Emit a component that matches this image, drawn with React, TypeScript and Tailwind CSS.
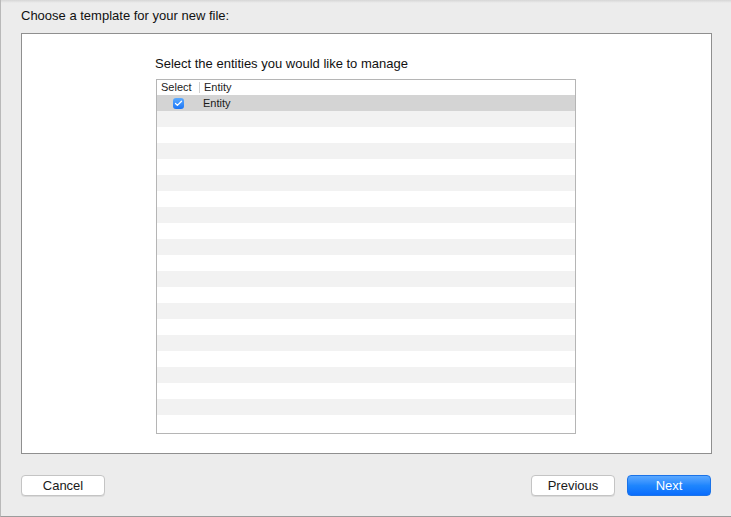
import { Check } from 'lucide-react'

const ROWS = 21

function Button({ label, primary }: { label: string; primary?: boolean }) {
  const base = 'h-[21px] rounded-[4px] text-[13px] leading-none flex items-center justify-center'
  const look = primary
    ? 'bg-gradient-to-b from-[#5aa8ff] via-[#1f86fd] to-[#0a6cfd] text-white border border-[#1b73e8]'
    : 'bg-white text-[#1a1a1a] border border-[#c4c4c4] shadow-[0_1px_0_rgba(0,0,0,0.08)]'
  return <button className={`${base} ${look} w-[84px]`}>{label}</button>
}

export default function App() {
  return (
    <div
      className="w-[731px] h-[517px] bg-[#ececec] flex flex-col border-l border-l-[#b9b9b9] border-b border-b-[#9c9c9c] overflow-hidden"
      style={{ fontFamily: '"Liberation Sans", Arial, sans-serif' }}
    >
      {/* top shadow */}
      <div className="h-[3px] bg-gradient-to-b from-[#d6d6d6] to-[#ececec] shrink-0" />

      <div className="pl-[20px] pt-[5px] text-[13px] leading-[16px] text-[#111]">
        Choose a template for your new file:
      </div>

      {/* content box */}
      <div className="ml-[20px] mt-[9px] w-[691px] h-[421px] bg-white border border-[#8f8f8f] shrink-0">
        <div className="pl-[133px] pt-[22px] text-[13px] leading-[16px] text-[#111]">
          Select the entities you would like to manage
        </div>

        <div className="ml-[134px] mt-[7px] w-[420px] h-[355px] border border-[#b5b5b5] bg-white overflow-hidden">
          {/* header */}
          <div className="h-[15px] flex items-center text-[11px] leading-none text-[#222] bg-white">
            <span className="pl-[4px] w-[42px]">Select</span>
            <span className="h-[11px] w-px bg-[#cfcfcf]" />
            <span className="pl-[4px]">Entity</span>
          </div>

          {/* rows */}
          <div className="flex flex-col">
            {Array.from({ length: ROWS }).map((_, i) => {
              const bg = i === 0 ? 'bg-[#d4d4d4]' : i % 2 === 1 ? 'bg-[#f2f2f2]' : 'bg-white'
              return (
                <div key={i} className={`h-[16px] flex items-center ${bg}`}>
                  {i === 0 && (
                    <>
                      <div className="ml-[16px] w-[11px] h-[11px] rounded-[3px] bg-gradient-to-b from-[#5aaaff] to-[#1a74f5] flex items-center justify-center">
                        <Check size={9} strokeWidth={3.5} className="text-white" />
                      </div>
                      <span className="ml-[19px] text-[11px] leading-none text-[#1a1a1a]">Entity</span>
                    </>
                  )}
                </div>
              )
            })}
          </div>
        </div>
      </div>

      {/* footer */}
      <div className="flex items-center mt-[21px] px-[20px]">
        <Button label="Cancel" />
        <div className="flex-1" />
        <Button label="Previous" />
        <div className="w-[12px]" />
        <Button label="Next" primary />
      </div>
    </div>
  )
}
